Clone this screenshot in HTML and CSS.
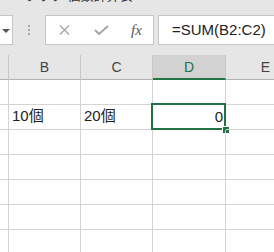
FILE: index.html
```html
<!DOCTYPE html>
<html lang="ja">
<head>
    <meta charset="UTF-8">
    <meta name="viewport" content="width=device-width, initial-scale=1.0">
    <title>SUM - Excel</title>
    <link rel="stylesheet" href="styles.css">
</head>
<body>
    <div class="toolbar">
        <div class="title"><span>ブック 個数計算表</span></div>
        <div class="formula-bar">
            <div class="name-box"><span class="arrow"></span></div>
            <div class="grip"><i></i><i></i><i></i></div>
            <div class="fx-box">
                <svg class="icon cancel" width="11" height="10" viewBox="0 0 11 10">
                    <path d="M1 0.5 L10 9.5 M10 0.5 L1 9.5" stroke="#a6a6a6" stroke-width="1.3" fill="none"/>
                </svg>
                <svg class="icon enter" width="15" height="10" viewBox="0 0 15 10">
                    <path d="M1 5 L5 9 L14 1" stroke="#a6a6a6" stroke-width="2" fill="none"/>
                </svg>
                <span class="fx">fx</span>
            </div>
            <div class="input-box">=SUM(B2:C2)</div>
        </div>
    </div>

    <div class="sheet">
        <!-- column headers -->
        <div class="cell head"></div>
        <div class="cell head">B</div>
        <div class="cell head">C</div>
        <div class="cell head active">D</div>
        <div class="cell head">E</div>

        <!-- row 1 -->
        <div class="cell"></div>
        <div class="cell"></div>
        <div class="cell"></div>
        <div class="cell"></div>
        <div class="cell"></div>

        <!-- row 2 -->
        <div class="cell"></div>
        <div class="cell text">10個</div>
        <div class="cell text">20個</div>
        <div class="cell num selected">0<span class="handle"></span></div>
        <div class="cell"></div>

        <!-- rows 3-7 -->
        <div class="cell"></div><div class="cell"></div><div class="cell"></div><div class="cell"></div><div class="cell"></div>
        <div class="cell"></div><div class="cell"></div><div class="cell"></div><div class="cell"></div><div class="cell"></div>
        <div class="cell"></div><div class="cell"></div><div class="cell"></div><div class="cell"></div><div class="cell"></div>
        <div class="cell"></div><div class="cell"></div><div class="cell"></div><div class="cell"></div><div class="cell"></div>
        <div class="cell"></div><div class="cell"></div><div class="cell"></div><div class="cell"></div><div class="cell"></div>
    </div>
</body>
</html>
```

FILE: styles.css
```css
:root {
    --bar: #e6e6e6;
    --line: #d4d4d4;
    --box-line: #c6c6c6;
    --green: #217346;
    --text: #222;
}

body {
    margin: 0;
    padding: 0;
    width: 274px;
    height: 252px;
    overflow: hidden;
    background: white;
    font-family: 'Liberation Sans', 'Noto Sans CJK JP', sans-serif;
    color: var(--text);
}

.toolbar {
    height: 55px;
    background: var(--bar);
}

.title {
    height: 5px;
    overflow: hidden;
    padding-left: 25px;
    font-size: 13px;
    line-height: 13px;
    color: #333;
}

.title span {
    display: block;
    margin-top: -11px;
}

.formula-bar {
    display: flex;
    margin-top: 10px;
    height: 30px;
}

.name-box {
    width: 14px;
    margin-left: -1px;
    background: white;
    border: 1px solid var(--box-line);
    box-sizing: border-box;
    position: relative;
}

.arrow {
    position: absolute;
    left: 2px;
    top: 13px;
    width: 0;
    height: 0;
    border-left: 4px solid transparent;
    border-right: 4px solid transparent;
    border-top: 4px solid #555;
}

.grip {
    width: 32px;
    display: flex;
    flex-direction: column;
    align-items: center;
    justify-content: center;
    gap: 2px;
}

.grip i {
    display: block;
    width: 2px;
    height: 2px;
    background: #a6a6a6;
}

.fx-box {
    width: 109px;
    background: white;
    border: 1px solid var(--box-line);
    box-sizing: border-box;
    display: flex;
    align-items: center;
}

.icon {
    display: block;
}

.cancel {
    margin-left: 13px;
}

.enter {
    margin-left: 24px;
}

.fx {
    margin-left: 22px;
    font-family: 'Liberation Serif', serif;
    font-style: italic;
    font-size: 15px;
    color: #555;
}

.input-box {
    flex: 1;
    margin-left: 4px;
    margin-right: -2px;
    background: white;
    border: 1px solid var(--box-line);
    box-sizing: border-box;
    padding-left: 13px;
    font-size: 15px;
    line-height: 28px;
    color: var(--text);
    white-space: nowrap;
}

.sheet {
    display: grid;
    grid-template-columns: 9px 72px 72px 73px 80px;
    grid-template-rows: 25px;
    grid-auto-rows: 25px;
}

.cell {
    box-sizing: border-box;
    border-right: 1px solid var(--line);
    border-bottom: 1px solid var(--line);
    font-size: 15px;
    display: flex;
    align-items: flex-end;
    padding: 0 3px 4px;
    white-space: nowrap;
    position: relative;
}

.head {
    background: var(--bar);
    border-right-color: #c8c8c8;
    border-bottom-color: #b4b4b4;
    justify-content: center;
    align-items: center;
    padding: 0;
    font-size: 14px;
    color: #444;
}

.head.active {
    background: #d2d2d2;
    color: var(--green);
    border-bottom: 2px solid var(--green);
    padding-top: 1px;
}

.num {
    justify-content: flex-end;
    padding-right: 2px;
}

.selected::before {
    content: "";
    position: absolute;
    top: -2px;
    left: -2px;
    right: -1px;
    bottom: -1px;
    border: 2px solid var(--green);
}

.handle {
    position: absolute;
    right: -4px;
    bottom: -4px;
    width: 6px;
    height: 6px;
    background: var(--green);
    outline: 1px solid white;
}
```
